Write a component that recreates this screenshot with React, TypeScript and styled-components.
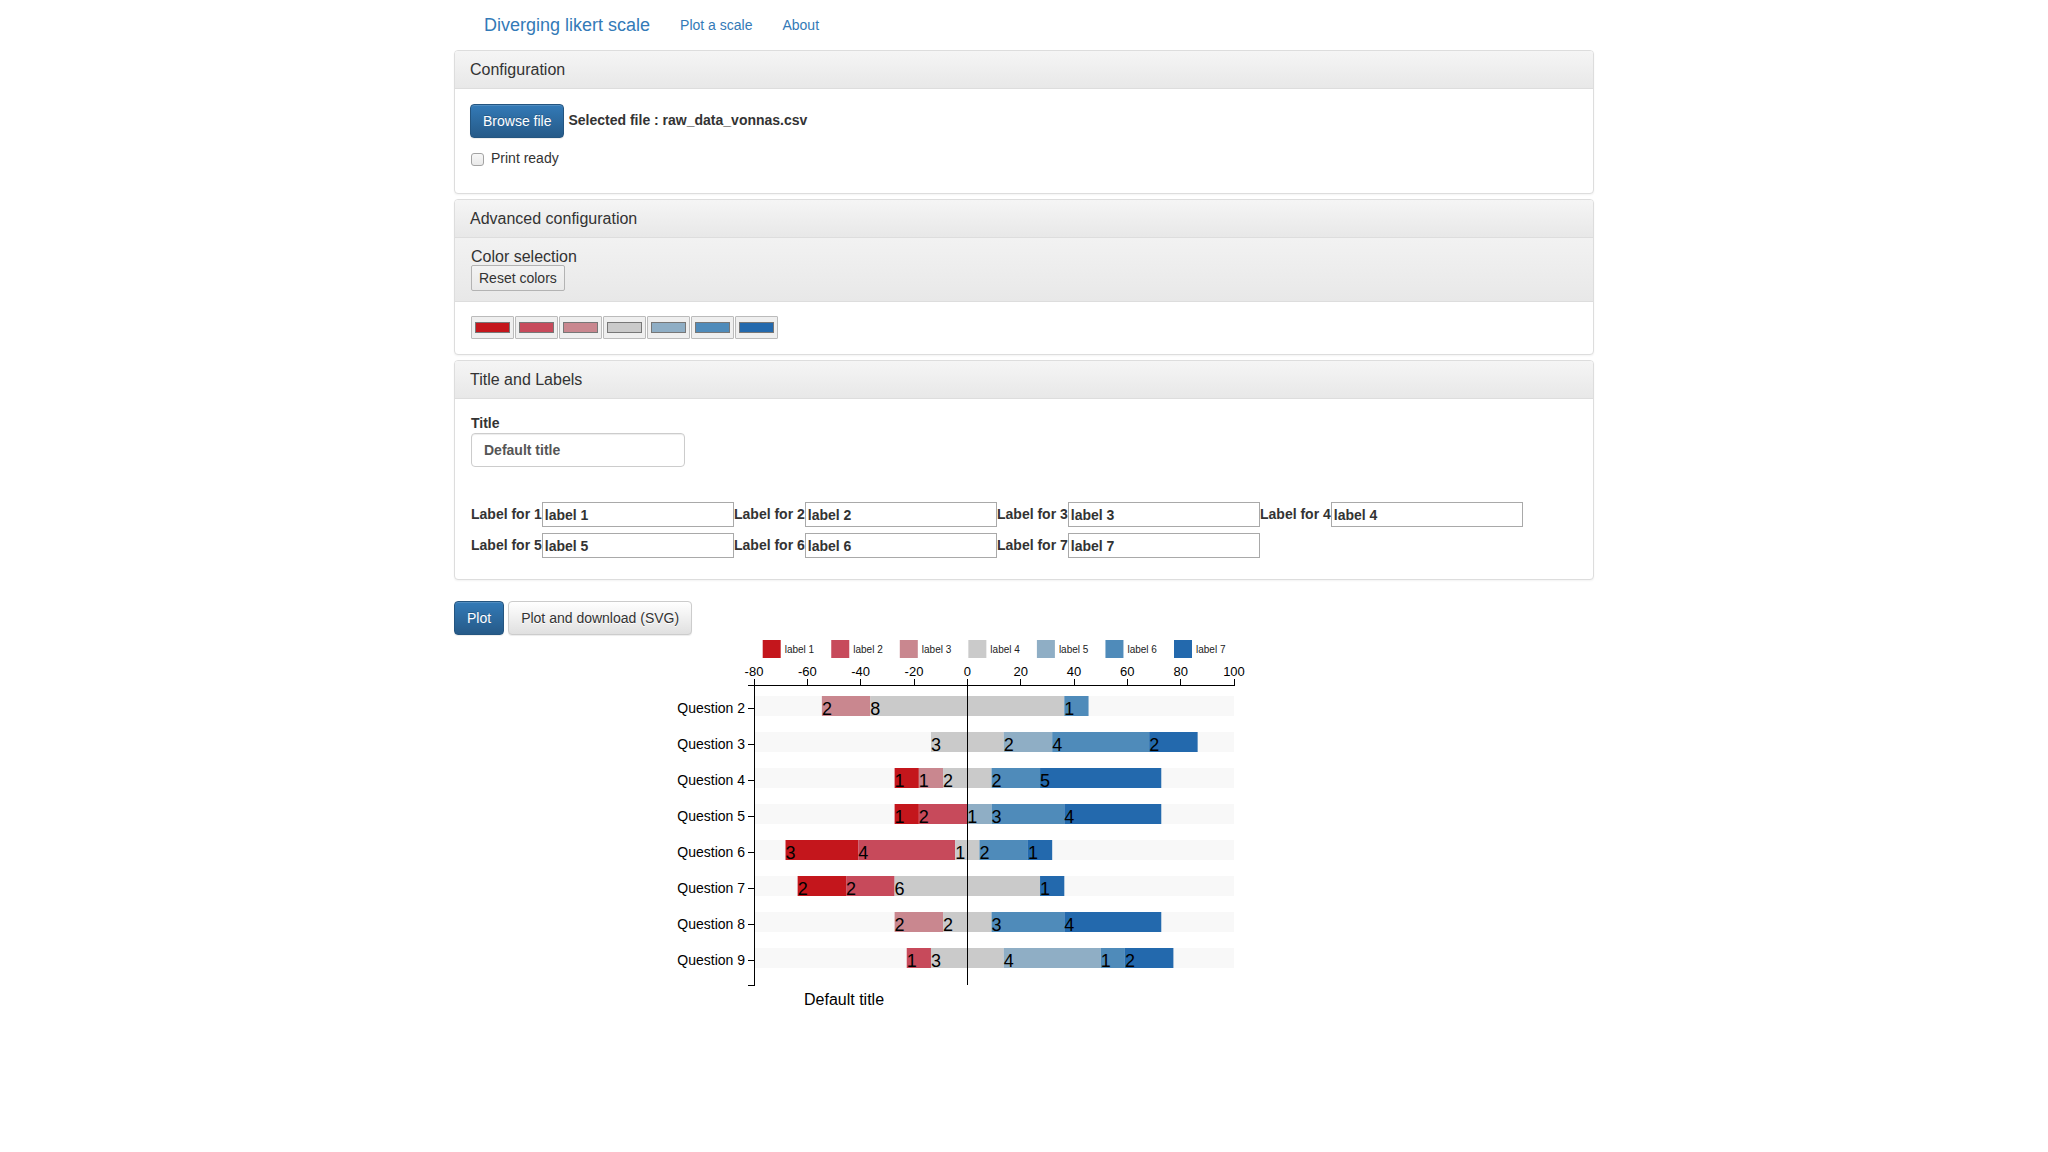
import React from "react";
import styled, { createGlobalStyle } from "styled-components";

const GlobalStyle = createGlobalStyle`
  html, body { margin: 0; padding: 0; background: #fff; }
  body {
    font-family: "Liberation Sans", Arial, Helvetica, sans-serif;
    font-size: 14px;
    line-height: 1.42857;
    color: #333;
  }
  * { box-sizing: border-box; }
`;

const Container = styled.div`
  width: 1140px;
  margin: 0 auto;
`;

const Navbar = styled.nav`
  height: 50px;
  display: flex;
  align-items: center;
  padding-left: 15px;
`;

const Brand = styled.a`
  font-size: 18px;
  line-height: 20px;
  padding: 15px;
  color: #337ab7;
  text-decoration: none;
`;

const NavLink = styled.a`
  font-size: 14px;
  line-height: 20px;
  padding: 15px;
  color: #337ab7;
  text-decoration: none;
`;

const PanelGroup = styled.div`
  display: flex;
  flex-direction: column;
  gap: 5px;
`;

const Panel = styled.section`
  border: 1px solid #ddd;
  border-radius: 4px;
  background: #fff;
  box-shadow: 0 1px 2px rgba(0, 0, 0, 0.05);
  overflow: hidden;
`;

const PanelHeading = styled.div`
  padding: 10px 15px;
  background-image: linear-gradient(to bottom, #f5f5f5 0%, #e8e8e8 100%);
  border-bottom: 1px solid #ddd;
`;

const PanelTitle = styled.h3`
  margin: 0;
  font-size: 16px;
  line-height: 17px;
  font-weight: normal;
  color: #333;
`;

const PanelBody = styled.div<{ $top?: number; $bottom?: number }>`
  padding: ${(p) => p.$top ?? 15}px 15px ${(p) => p.$bottom ?? 15}px;
`;

const FileRow = styled.div`
  display: flex;
  align-items: center;
  gap: 4px;
`;

const PrimaryButton = styled.button`
  font-family: inherit;
  font-size: 14px;
  line-height: 20px;
  padding: 6px 12px;
  color: #fff;
  border: 1px solid #245580;
  border-radius: 4px;
  background-image: linear-gradient(to bottom, #337ab7 0%, #265a88 100%);
  text-shadow: 0 -1px 0 rgba(0, 0, 0, 0.2);
  box-shadow: inset 0 1px 0 rgba(255, 255, 255, 0.15), 0 1px 1px rgba(0, 0, 0, 0.075);
  cursor: pointer;
`;

const DefaultButton = styled.button`
  font-family: inherit;
  font-size: 14px;
  line-height: 20px;
  padding: 6px 12px;
  color: #333;
  border: 1px solid #ccc;
  border-radius: 4px;
  background-image: linear-gradient(to bottom, #fff 0%, #e0e0e0 100%);
  text-shadow: 0 1px 0 #fff;
  box-shadow: inset 0 1px 0 rgba(255, 255, 255, 0.15), 0 1px 1px rgba(0, 0, 0, 0.075);
  cursor: pointer;
`;

const SelectedFile = styled.span`
  font-weight: bold;
`;

const CheckRow = styled.label`
  display: flex;
  align-items: center;
  gap: 7px;
  height: 20px;
  margin: 11px 0 9px;
  padding-left: 1px;
`;

const CheckBox = styled.input`
  appearance: none;
  width: 13px;
  height: 13px;
  margin: 0;
  border: 1px solid #a3a3a3;
  border-radius: 3px;
  background: linear-gradient(to bottom, #f7f7f7, #e9e9e9);
`;

const SubHeading = styled.div`
  padding: 10px 15px;
  background-image: linear-gradient(to bottom, #f2f2f2 0%, #e8e8e8 100%);
  border-bottom: 1px solid #ddd;
`;

const SubTitle = styled.div`
  font-size: 16px;
  line-height: 17px;
  padding-left: 1px;
`;

const ResetButton = styled.button`
  display: block;
  font-family: inherit;
  font-size: 14px;
  line-height: 17px;
  height: 26px;
  padding: 3px 7px;
  margin-left: 1px;
  color: #333;
  border: 1px solid #b3b3b3;
  border-radius: 2px;
  background: linear-gradient(to bottom, #f3f3f3, #e9e9e9);
`;

const SwatchRow = styled.div`
  display: flex;
  gap: 1px;
  padding-left: 1px;
`;

const SwatchButton = styled.button`
  width: 43px;
  height: 23px;
  padding: 0;
  display: flex;
  align-items: center;
  justify-content: center;
  border: 1px solid #bbb;
  border-radius: 1px;
  background: #efefef;
`;

const Swatch = styled.span<{ $color: string }>`
  display: block;
  width: 35px;
  height: 11px;
  border: 1px solid #777;
  background: ${(p) => p.$color};
`;

const FieldLabel = styled.label`
  display: block;
  font-weight: bold;
  line-height: 20px;
  padding-left: 1px;
`;

const TitleInput = styled.input`
  display: block;
  width: 214px;
  height: 34px;
  margin: 0 0 0 1px;
  padding: 6px 12px;
  font-family: inherit;
  font-size: 14px;
  font-weight: bold;
  color: #555;
  border: 1px solid #ccc;
  border-radius: 4px;
  box-shadow: inset 0 1px 1px rgba(0, 0, 0, 0.075);
`;

const LabelGrid = styled.div`
  margin-top: 35px;
  display: flex;
  flex-wrap: wrap;
  row-gap: 6px;
  padding-left: 1px;
`;

const LabelPair = styled.label`
  display: flex;
  align-items: center;
  font-weight: bold;
  width: 263px;
`;

const LabelInput = styled.input`
  width: 192px;
  height: 25px;
  margin: 0;
  padding: 1px 2px;
  font: inherit;
  color: #333;
  border: 1px solid #a9a9a9;
  border-radius: 0;
`;

const ButtonRow = styled.div`
  display: flex;
  gap: 4px;
  margin-top: 21px;
`;

const ChartSvg = styled.svg`
  display: block;
  font-family: "Liberation Sans", Arial, Helvetica, sans-serif;
`;

const COLORS = ["#c4161c", "#c74a5b", "#c9878f", "#cacaca", "#8faec5", "#4f8bba", "#2369ad"];
const LABELS = ["label 1", "label 2", "label 3", "label 4", "label 5", "label 6", "label 7"];
const QUESTIONS: { name: string; counts: number[] }[] = [
  { name: "Question 2", counts: [0, 0, 2, 8, 0, 1, 0] },
  { name: "Question 3", counts: [0, 0, 0, 3, 2, 4, 2] },
  { name: "Question 4", counts: [1, 0, 1, 2, 0, 2, 5] },
  { name: "Question 5", counts: [1, 2, 0, 0, 1, 3, 4] },
  { name: "Question 6", counts: [3, 4, 0, 1, 0, 2, 1] },
  { name: "Question 7", counts: [2, 2, 0, 6, 0, 0, 1] },
  { name: "Question 8", counts: [0, 0, 2, 2, 0, 3, 4] },
  { name: "Question 9", counts: [0, 1, 0, 3, 4, 1, 2] },
];

const X_LEFT = 300;
const X_RIGHT = 780;
const xs = (v: number) => X_LEFT + ((v + 80) * (X_RIGHT - X_LEFT)) / 180;
const AXIS_Y = 50;
const BOTTOM_Y = 350;
const bandTop = (i: number) => 61 + 36 * i;
const TICKS = [-80, -60, -40, -20, 0, 20, 40, 60, 80, 100];

function Chart() {
  const zero = xs(0);
  return (
    <ChartSvg width={1140} height={380} viewBox="0 0 1140 380">
      {LABELS.map((l, i) => (
        <g key={l}>
          <rect x={308.7 + 68.55 * i} y={5} width={18} height={18} fill={COLORS[i]} />
          <text x={330.7 + 68.55 * i} y={17.5} fontSize={10} fill="#222">
            {l}
          </text>
        </g>
      ))}

      {QUESTIONS.map((q, i) => {
        const total = q.counts.reduce((a, b) => a + b, 0);
        const pct = q.counts.map((c) => (c / total) * 100);
        let start = -(pct[0] + pct[1] + pct[2] + pct[3] / 2);
        const top = bandTop(i);
        const segs = pct.map((p, k) => {
          const s = start;
          start += p;
          return { s, p, k, c: q.counts[k] };
        });
        return (
          <g key={q.name}>
            <rect x={X_LEFT} y={top} width={X_RIGHT - X_LEFT} height={20} fill="#f8f8f8" />
            {segs
              .filter((g) => g.c > 0)
              .map((g) => (
                <rect
                  key={`r${g.k}`}
                  x={xs(g.s)}
                  y={top}
                  width={xs(g.s + g.p) - xs(g.s)}
                  height={20}
                  fill={COLORS[g.k]}
                />
              ))}
            {segs
              .filter((g) => g.c > 0)
              .map((g) => (
                <text key={`t${g.k}`} x={xs(g.s)} y={top + 18.5} fontSize={18} fill="#000">
                  {g.c}
                </text>
              ))}
            <line x1={294} x2={300} y1={top + 12.5} y2={top + 12.5} stroke="#000" shapeRendering="crispEdges" />
            <text x={291} y={top + 12.5} dy="0.32em" fontSize={14} textAnchor="end" fill="#000">
              {q.name}
            </text>
          </g>
        );
      })}

      <path
        d={`M${X_LEFT},${AXIS_Y - 6}V${AXIS_Y}H${X_RIGHT}V${AXIS_Y - 6}`}
        fill="none"
        stroke="#000"
        shapeRendering="crispEdges"
      />
      {TICKS.map((t) => (
        <g key={t}>
          <line x1={xs(t)} x2={xs(t)} y1={AXIS_Y} y2={AXIS_Y - 6} stroke="#000" shapeRendering="crispEdges" />
          <text x={xs(t)} y={AXIS_Y - 9} fontSize={13} textAnchor="middle" fill="#000">
            {t}
          </text>
        </g>
      ))}
      <path
        d={`M${X_LEFT - 6},${AXIS_Y}H${X_LEFT}V${BOTTOM_Y}H${X_LEFT - 6}`}
        fill="none"
        stroke="#000"
        shapeRendering="crispEdges"
      />
      <line x1={zero} x2={zero} y1={AXIS_Y} y2={BOTTOM_Y} stroke="#000" shapeRendering="crispEdges" />

      <text x={350} y={370} fontSize={16} fill="#000">
        Default title
      </text>
    </ChartSvg>
  );
}

export default function App() {
  return (
    <>
      <GlobalStyle />
      <Container>
        <Navbar>
          <Brand href="#">Diverging likert scale</Brand>
          <NavLink href="#">Plot a scale</NavLink>
          <NavLink href="#">About</NavLink>
        </Navbar>

        <PanelGroup>
          <Panel>
            <PanelHeading>
              <PanelTitle>Configuration</PanelTitle>
            </PanelHeading>
            <PanelBody>
              <FileRow>
                <PrimaryButton>Browse file</PrimaryButton>
                <SelectedFile>Selected file : raw_data_vonnas.csv</SelectedFile>
              </FileRow>
              <CheckRow>
                <CheckBox type="checkbox" />
                Print ready
              </CheckRow>
            </PanelBody>
          </Panel>

          <Panel>
            <PanelHeading>
              <PanelTitle>Advanced configuration</PanelTitle>
            </PanelHeading>
            <SubHeading>
              <SubTitle>Color selection</SubTitle>
              <ResetButton>Reset colors</ResetButton>
            </SubHeading>
            <PanelBody $top={14}>
              <SwatchRow>
                {COLORS.map((c) => (
                  <SwatchButton key={c}>
                    <Swatch $color={c} />
                  </SwatchButton>
                ))}
              </SwatchRow>
            </PanelBody>
          </Panel>

          <Panel>
            <PanelHeading>
              <PanelTitle>Title and Labels</PanelTitle>
            </PanelHeading>
            <PanelBody $top={14} $bottom={21}>
              <FieldLabel>Title</FieldLabel>
              <TitleInput defaultValue="Default title" />
              <LabelGrid>
                {LABELS.map((l, i) => (
                  <LabelPair key={l}>
                    Label for {i + 1}
                    <LabelInput defaultValue={l} />
                  </LabelPair>
                ))}
              </LabelGrid>
            </PanelBody>
          </Panel>
        </PanelGroup>

        <ButtonRow>
          <PrimaryButton>Plot</PrimaryButton>
          <DefaultButton>Plot and download (SVG)</DefaultButton>
        </ButtonRow>

        <Chart />
      </Container>
    </>
  );
}
